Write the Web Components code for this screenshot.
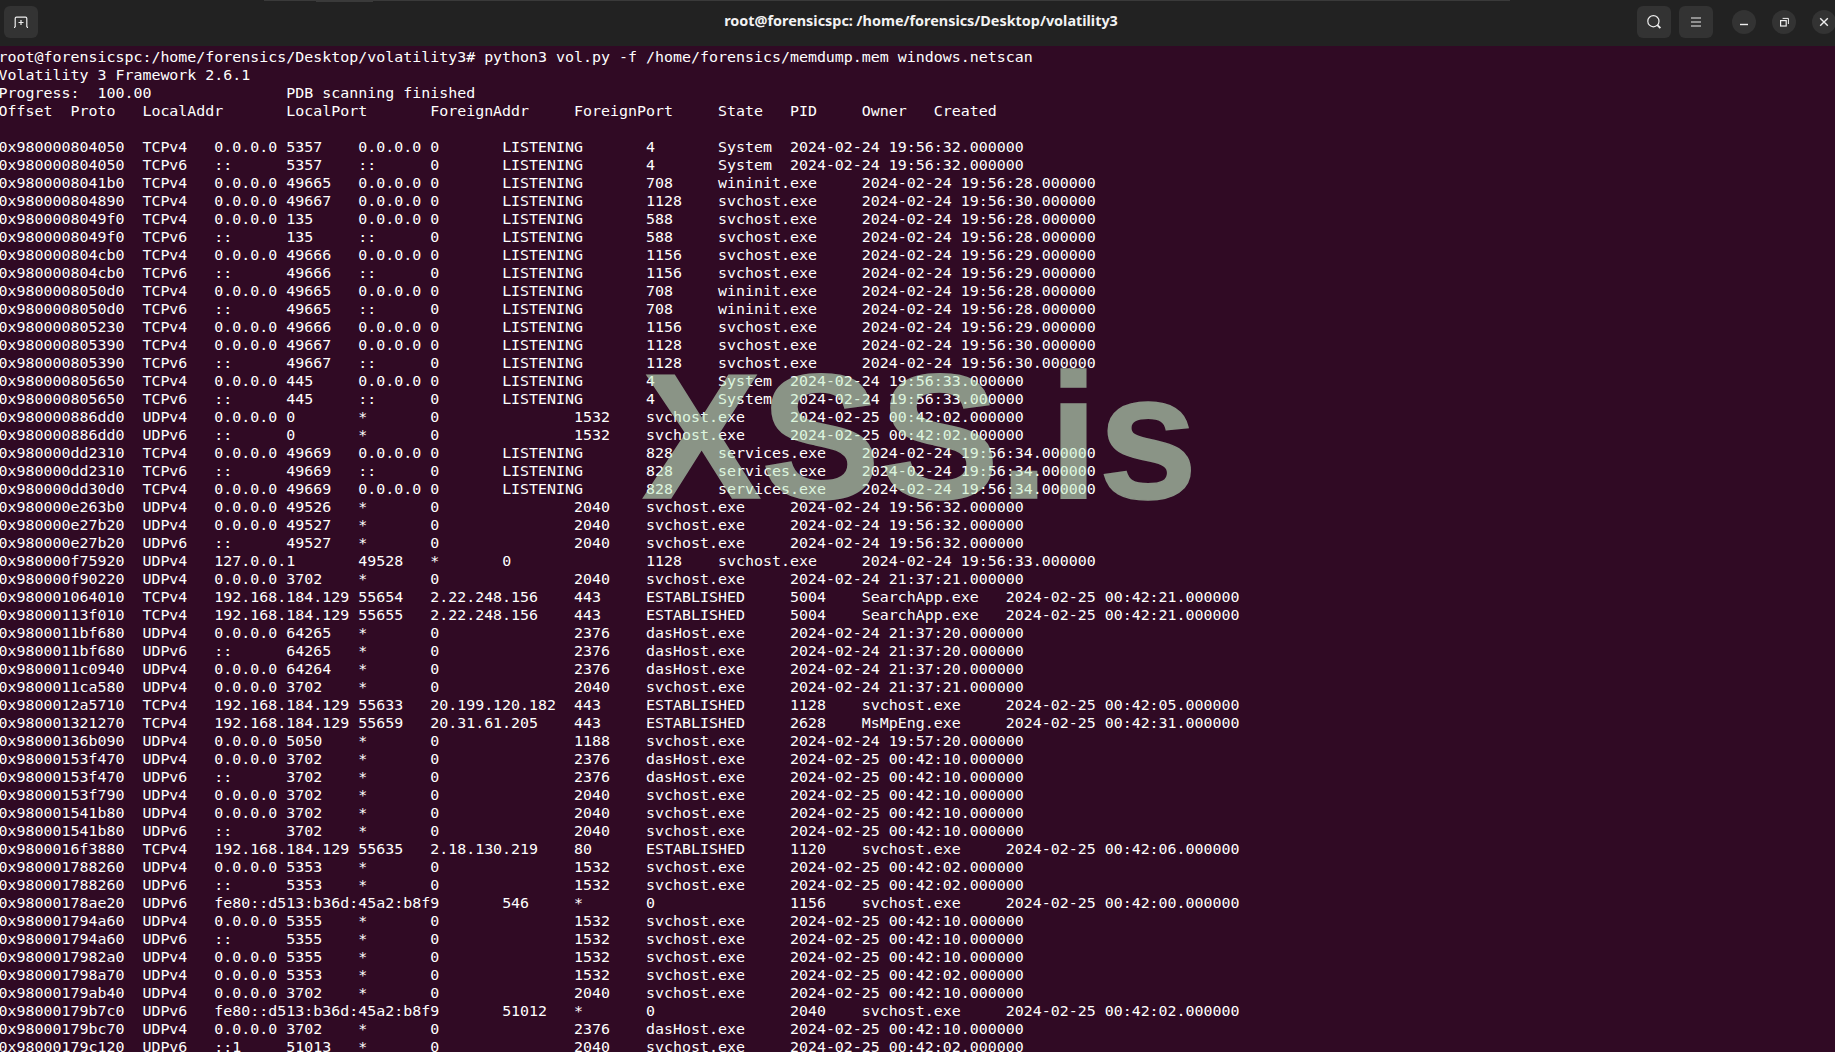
<!DOCTYPE html>
<html>
<head>
<meta charset="utf-8">
<title>root@forensicspc</title>
<style>
  html, body { margin: 0; height: 100%; overflow: hidden; background: #300a24; }
</style>
</head>
<body>
<term-window>
<term-headerbar slot="bar" title-text="root@forensicspc: /home/forensics/Desktop/volatility3"></term-headerbar>
<term-output>root@forensicspc:/home/forensics/Desktop/volatility3# python3 vol.py -f /home/forensics/memdump.mem windows.netscan
Volatility 3 Framework 2.6.1
Progress:  100.00		PDB scanning finished
Offset	Proto	LocalAddr	LocalPort	ForeignAddr	ForeignPort	State	PID	Owner	Created

0x980000804050	TCPv4	0.0.0.0	5357	0.0.0.0	0	LISTENING	4	System	2024-02-24 19:56:32.000000
0x980000804050	TCPv6	::	5357	::	0	LISTENING	4	System	2024-02-24 19:56:32.000000
0x9800008041b0	TCPv4	0.0.0.0	49665	0.0.0.0	0	LISTENING	708	wininit.exe	2024-02-24 19:56:28.000000
0x980000804890	TCPv4	0.0.0.0	49667	0.0.0.0	0	LISTENING	1128	svchost.exe	2024-02-24 19:56:30.000000
0x9800008049f0	TCPv4	0.0.0.0	135	0.0.0.0	0	LISTENING	588	svchost.exe	2024-02-24 19:56:28.000000
0x9800008049f0	TCPv6	::	135	::	0	LISTENING	588	svchost.exe	2024-02-24 19:56:28.000000
0x980000804cb0	TCPv4	0.0.0.0	49666	0.0.0.0	0	LISTENING	1156	svchost.exe	2024-02-24 19:56:29.000000
0x980000804cb0	TCPv6	::	49666	::	0	LISTENING	1156	svchost.exe	2024-02-24 19:56:29.000000
0x9800008050d0	TCPv4	0.0.0.0	49665	0.0.0.0	0	LISTENING	708	wininit.exe	2024-02-24 19:56:28.000000
0x9800008050d0	TCPv6	::	49665	::	0	LISTENING	708	wininit.exe	2024-02-24 19:56:28.000000
0x980000805230	TCPv4	0.0.0.0	49666	0.0.0.0	0	LISTENING	1156	svchost.exe	2024-02-24 19:56:29.000000
0x980000805390	TCPv4	0.0.0.0	49667	0.0.0.0	0	LISTENING	1128	svchost.exe	2024-02-24 19:56:30.000000
0x980000805390	TCPv6	::	49667	::	0	LISTENING	1128	svchost.exe	2024-02-24 19:56:30.000000
0x980000805650	TCPv4	0.0.0.0	445	0.0.0.0	0	LISTENING	4	System	2024-02-24 19:56:33.000000
0x980000805650	TCPv6	::	445	::	0	LISTENING	4	System	2024-02-24 19:56:33.000000
0x980000886dd0	UDPv4	0.0.0.0	0	*	0		1532	svchost.exe	2024-02-25 00:42:02.000000
0x980000886dd0	UDPv6	::	0	*	0		1532	svchost.exe	2024-02-25 00:42:02.000000
0x980000dd2310	TCPv4	0.0.0.0	49669	0.0.0.0	0	LISTENING	828	services.exe	2024-02-24 19:56:34.000000
0x980000dd2310	TCPv6	::	49669	::	0	LISTENING	828	services.exe	2024-02-24 19:56:34.000000
0x980000dd30d0	TCPv4	0.0.0.0	49669	0.0.0.0	0	LISTENING	828	services.exe	2024-02-24 19:56:34.000000
0x980000e263b0	UDPv4	0.0.0.0	49526	*	0		2040	svchost.exe	2024-02-24 19:56:32.000000
0x980000e27b20	UDPv4	0.0.0.0	49527	*	0		2040	svchost.exe	2024-02-24 19:56:32.000000
0x980000e27b20	UDPv6	::	49527	*	0		2040	svchost.exe	2024-02-24 19:56:32.000000
0x980000f75920	UDPv4	127.0.0.1	49528	*	0		1128	svchost.exe	2024-02-24 19:56:33.000000
0x980000f90220	UDPv4	0.0.0.0	3702	*	0		2040	svchost.exe	2024-02-24 21:37:21.000000
0x980001064010	TCPv4	192.168.184.129	55654	2.22.248.156	443	ESTABLISHED	5004	SearchApp.exe	2024-02-25 00:42:21.000000
0x98000113f010	TCPv4	192.168.184.129	55655	2.22.248.156	443	ESTABLISHED	5004	SearchApp.exe	2024-02-25 00:42:21.000000
0x9800011bf680	UDPv4	0.0.0.0	64265	*	0		2376	dasHost.exe	2024-02-24 21:37:20.000000
0x9800011bf680	UDPv6	::	64265	*	0		2376	dasHost.exe	2024-02-24 21:37:20.000000
0x9800011c0940	UDPv4	0.0.0.0	64264	*	0		2376	dasHost.exe	2024-02-24 21:37:20.000000
0x9800011ca580	UDPv4	0.0.0.0	3702	*	0		2040	svchost.exe	2024-02-24 21:37:21.000000
0x9800012a5710	TCPv4	192.168.184.129	55633	20.199.120.182	443	ESTABLISHED	1128	svchost.exe	2024-02-25 00:42:05.000000
0x980001321270	TCPv4	192.168.184.129	55659	20.31.61.205	443	ESTABLISHED	2628	MsMpEng.exe	2024-02-25 00:42:31.000000
0x98000136b090	UDPv4	0.0.0.0	5050	*	0		1188	svchost.exe	2024-02-24 19:57:20.000000
0x98000153f470	UDPv4	0.0.0.0	3702	*	0		2376	dasHost.exe	2024-02-25 00:42:10.000000
0x98000153f470	UDPv6	::	3702	*	0		2376	dasHost.exe	2024-02-25 00:42:10.000000
0x98000153f790	UDPv4	0.0.0.0	3702	*	0		2040	svchost.exe	2024-02-25 00:42:10.000000
0x980001541b80	UDPv4	0.0.0.0	3702	*	0		2040	svchost.exe	2024-02-25 00:42:10.000000
0x980001541b80	UDPv6	::	3702	*	0		2040	svchost.exe	2024-02-25 00:42:10.000000
0x9800016f3880	TCPv4	192.168.184.129	55635	2.18.130.219	80	ESTABLISHED	1120	svchost.exe	2024-02-25 00:42:06.000000
0x980001788260	UDPv4	0.0.0.0	5353	*	0		1532	svchost.exe	2024-02-25 00:42:02.000000
0x980001788260	UDPv6	::	5353	*	0		1532	svchost.exe	2024-02-25 00:42:02.000000
0x98000178ae20	UDPv6	fe80::d513:b36d:45a2:b8f9	546	*	0		1156	svchost.exe	2024-02-25 00:42:00.000000
0x980001794a60	UDPv4	0.0.0.0	5355	*	0		1532	svchost.exe	2024-02-25 00:42:10.000000
0x980001794a60	UDPv6	::	5355	*	0		1532	svchost.exe	2024-02-25 00:42:10.000000
0x9800017982a0	UDPv4	0.0.0.0	5355	*	0		1532	svchost.exe	2024-02-25 00:42:10.000000
0x980001798a70	UDPv4	0.0.0.0	5353	*	0		1532	svchost.exe	2024-02-25 00:42:02.000000
0x98000179ab40	UDPv4	0.0.0.0	3702	*	0		2040	svchost.exe	2024-02-25 00:42:10.000000
0x98000179b7c0	UDPv6	fe80::d513:b36d:45a2:b8f9	51012	*	0		2040	svchost.exe	2024-02-25 00:42:02.000000
0x98000179bc70	UDPv4	0.0.0.0	3702	*	0		2376	dasHost.exe	2024-02-25 00:42:10.000000
0x98000179c120	UDPv6	::1	51013	*	0		2040	svchost.exe	2024-02-25 00:42:02.000000</term-output>
<xss-watermark>XSS.is</xss-watermark>
</term-window>

<script>
class TermButton extends HTMLElement {
  constructor() {
    super();
    this.attachShadow({ mode: "open" });
    this.shadowRoot.innerHTML = /* html */`
    <style>
      :host {
        display: flex;
        width: 34px;
        height: 32px;
        background: #333333;
        border-radius: 6px;
        align-items: center;
        justify-content: center;
      }
    </style>
    <slot></slot>`;
  }
}

class WindowControl extends HTMLElement {
  constructor() {
    super();
    this.attachShadow({ mode: "open" });
    this.shadowRoot.innerHTML = /* html */`
    <style>
      :host {
        display: flex;
        flex: none;
        width: 24px;
        height: 24px;
        background: #333333;
        border-radius: 50%;
        align-items: center;
        justify-content: center;
      }
    </style>
    <slot></slot>`;
  }
}

class TermHeaderbar extends HTMLElement {
  constructor() {
    super();
    this.attachShadow({ mode: "open" });
  }

  connectedCallback() {
    const title = this.getAttribute("title-text") ?? "";
    this.shadowRoot.innerHTML = /* html */`
    <style>
      :host {
        display: grid;
        grid-template-columns: 1fr auto 1fr;
        align-items: center;
        box-sizing: border-box;
        height: 46px;
        padding-bottom: 2px;
        background: #222222;
        position: relative;
        flex: none;
      }
      .strip {
        position: absolute;
        top: 0;
        left: 264px;
        width: 1246px;
        height: 1px;
        background: #3a3a3a;
      }
      .strip::after {
        content: "";
        position: absolute;
        left: 52px;
        width: 57px;
        height: 2px;
        background: #3a3a3a;
      }
      .left { padding-left: 4px; display: flex; }
      .title {
        font: 700 14.4px "Noto Sans", sans-serif;
        color: #f2f2f2;
        padding-left: 7px;
        white-space: nowrap;
        margin-top: -3px;
      }
      .right {
        display: flex;
        justify-content: flex-end;
        align-items: center;
        margin-right: -1px;
      }
      .buttons { display: flex; gap: 8px; margin-right: 19px; }
      .controls { display: flex; gap: 16px; }
      svg { display: block; fill: none; stroke: #eeeeee; stroke-width: 1.2; }
    </style>
    <div class="strip"></div>
    <div class="left">
      <term-button>
        <svg width="16" height="16" viewBox="0 0 16 16">
          <path d="M2.2 13V4.5Q2.2 3.2 3.5 3.2H12.5Q13.8 3.2 13.8 4.5V13M1 13.4H2.2M13.8 13.4H15M8 5.9V11M5.5 8.5H10.5"/>
        </svg>
      </term-button>
    </div>
    <div class="title">${title}</div>
    <div class="right">
      <div class="buttons">
        <term-button>
          <svg width="16" height="16" viewBox="0 0 16 16">
            <circle cx="7.4" cy="7.2" r="5.6"/>
            <path d="M11.4 11.2L14.4 14.2" stroke-width="1.8"/>
          </svg>
        </term-button>
        <term-button>
          <svg width="16" height="16" viewBox="0 0 16 16">
            <path d="M3 4H13M3 8H13M3 12H13"/>
          </svg>
        </term-button>
      </div>
      <div class="controls">
        <window-control>
          <svg width="16" height="16" viewBox="0 0 16 16">
            <path d="M4 10.5H12" stroke-width="1.4"/>
          </svg>
        </window-control>
        <window-control>
          <svg width="16" height="16" viewBox="0 0 16 16">
            <rect x="4.6" y="6.6" width="5.6" height="5.4"/>
            <path d="M6.6 4.4H12.4V10" stroke-width="1"/>
          </svg>
        </window-control>
        <window-control>
          <svg width="16" height="16" viewBox="0 0 16 16">
            <path d="M4.2 4.2L11.8 11.8M11.8 4.2L4.2 11.8" stroke-width="1.4"/>
          </svg>
        </window-control>
      </div>
    </div>`;
  }
}

class TermOutput extends HTMLElement {
  constructor() {
    super();
    this.attachShadow({ mode: "open" });
    this.shadowRoot.innerHTML = /* html */`
    <style>
      :host {
        display: block;
        flex: 1;
        min-height: 0;
        overflow: hidden;
        background: #300a24;
        color: #ffffff;
        padding-top: 2px;
      }
      pre {
        margin: 0 0 0 -1.5px;
        font-family: "DejaVu Sans Mono", monospace;
        font-size: 14.95px;
        line-height: 18px;
        tab-size: 8;
        white-space: pre;
      }
    </style>
    <pre><slot></slot></pre>`;
  }
}

class XssWatermark extends HTMLElement {
  constructor() {
    super();
    this.attachShadow({ mode: "open" });
    this.shadowRoot.innerHTML = /* html */`
    <style>
      :host {
        position: absolute;
        left: 642px;
        top: 347px;
        font: 700 178.5px/1 "Liberation Sans", sans-serif;
        -webkit-text-stroke: 1.5px rgb(198, 240, 200);
        color: rgb(198, 240, 200);
        opacity: 0.6;
        white-space: nowrap;
        pointer-events: none;
      }
    </style>
    <slot></slot>`;
  }
}

class TermWindow extends HTMLElement {
  constructor() {
    super();
    this.attachShadow({ mode: "open" });
    this.shadowRoot.innerHTML = /* html */`
    <style>
      :host {
        display: flex;
        flex-direction: column;
        position: relative;
        height: 100vh;
        overflow: hidden;
      }
    </style>
    <slot name="bar"></slot>
    <slot></slot>`;
  }
}

customElements.define("term-button", TermButton);
customElements.define("window-control", WindowControl);
customElements.define("term-headerbar", TermHeaderbar);
customElements.define("term-output", TermOutput);
customElements.define("xss-watermark", XssWatermark);
customElements.define("term-window", TermWindow);
</script>
</body>
</html>
